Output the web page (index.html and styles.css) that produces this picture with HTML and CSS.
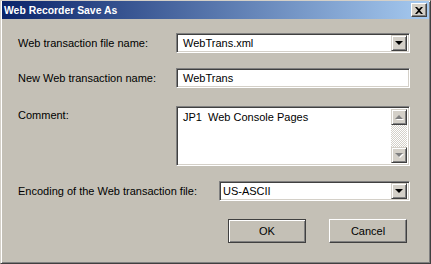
FILE: index.html
```html
<!DOCTYPE html>
<html lang="en">
<head>
    <meta charset="UTF-8">
    <title>Web Recorder Save As</title>
    <link rel="stylesheet" href="styles.css">
</head>
<body>

    <!-- Ventana de dialogo -->
    <div class="ventana">
        <div class="barra-titulo">
            <span class="titulo">Web Recorder Save As</span>
            <button class="boton-cerrar">
                <svg width="8" height="7" viewBox="0 0 8 7"><path d="M0 0h2l2 2 2-2h2L5 3.5 8 7H6L4 5 2 7H0l3-3.5z" fill="#000"/></svg>
            </button>
        </div>

        <div class="contenido">
            <div class="fila">
                <label class="etiqueta">Web transaction file name:</label>
                <div class="combo">
                    <span class="valor">WebTrans.xml</span>
                    <span class="flecha"><i class="triangulo"></i></span>
                </div>
            </div>

            <div class="fila fila-nombre">
                <label class="etiqueta">New Web transaction name:</label>
                <div class="campo"><span class="valor">WebTrans</span></div>
            </div>

            <div class="fila fila-comentario">
                <label class="etiqueta">Comment:</label>
                <div class="area">
                    <span class="valor">JP1&nbsp;&nbsp;Web Console Pages</span>
                    <div class="scroll">
                        <span class="scroll-boton"><i class="triangulo-gris arriba"></i></span>
                        <span class="pista"></span>
                        <span class="scroll-boton"><i class="triangulo-gris"></i></span>
                    </div>
                </div>
            </div>

            <div class="fila fila-codificacion">
                <label class="etiqueta etiqueta-larga">Encoding of the Web transaction file:</label>
                <div class="combo">
                    <span class="valor">US-ASCII</span>
                    <span class="flecha"><i class="triangulo"></i></span>
                </div>
            </div>

            <div class="acciones">
                <button class="boton boton-defecto">OK</button>
                <button class="boton">Cancel</button>
            </div>
        </div>
    </div>

</body>
</html>
```

FILE: styles.css
```css
body {
    margin: 0;
    font-family: "Liberation Sans", Arial, sans-serif;
    font-size: 11px;
    color: #000;
    background: #c4c0b6;
}
.ventana {
    width: 431px;
    height: 264px;
    box-sizing: border-box;
    background: #c4c0b6;
    border: 1px solid;
    border-color: #d4d0c8 #404040 #404040 #d4d0c8;
    box-shadow: inset 1px 1px #fff, inset -1px -1px #808080;
}
.barra-titulo {
    height: 18px;
    margin: 0 1px;
    display: flex;
    align-items: center;
    justify-content: space-between;
    padding: 0 2px 0 2px;
    background: linear-gradient(to right, #0a246a, #a6caf0);
}
.titulo {
    color: #fff;
    font-weight: bold;
    font-size: 10.4px;
}
.boton-cerrar {
    width: 16px;
    height: 14px;
    padding: 0;
    display: flex;
    align-items: center;
    justify-content: center;
    background: #d4d0c8;
    border: 1px solid;
    border-color: #fff #404040 #404040 #fff;
    box-shadow: inset -1px -1px #808080;
}
.contenido {
    padding: 14px 20px 0 17px;
}
.fila {
    display: flex;
    align-items: center;
    height: 20px;
}
.fila-nombre {
    margin-top: 15px;
}
.fila-comentario {
    margin-top: 18px;
    height: 60px;
    align-items: flex-start;
}
.fila-comentario .etiqueta {
    padding-top: 2px;
}
.fila-codificacion {
    margin-top: 15px;
}
.etiqueta {
    width: 158px;
    flex: none;
    line-height: 14px;
}
.etiqueta-larga {
    width: 201px;
}
.combo, .campo, .area {
    flex: 1;
    height: 100%;
    box-sizing: border-box;
    display: flex;
    align-items: center;
    background: #fff;
    border: 1px solid;
    border-color: #808080 #fff #fff #808080;
    box-shadow: inset 1px 1px #404040, inset -1px -1px #d4d0c8;
    padding: 2px;
}
.valor {
    flex: 1;
    padding-left: 4px;
    line-height: 14px;
}
.fila-codificacion .valor {
    padding-left: 1px;
}
.flecha, .scroll-boton {
    width: 16px;
    height: 16px;
    box-sizing: border-box;
    display: flex;
    align-items: center;
    justify-content: center;
    background: #d4d0c8;
    border: 1px solid;
    border-color: #d4d0c8 #404040 #404040 #d4d0c8;
    box-shadow: inset 1px 1px #fff, inset -1px -1px #808080;
}
.triangulo {
    width: 0;
    height: 0;
    border-left: 4px solid transparent;
    border-right: 4px solid transparent;
    border-top: 4px solid #000;
}
.area {
    align-items: stretch;
}
.area .valor {
    padding-top: 1px;
}
.scroll {
    width: 16px;
    display: flex;
    flex-direction: column;
}
.pista {
    flex: 1;
    background: repeating-conic-gradient(#d4d0c8 0 25%, #fff 0 50%) 0 0 / 2px 2px;
}
.triangulo-gris {
    width: 0;
    height: 0;
    border-left: 4px solid transparent;
    border-right: 4px solid transparent;
    border-top: 4px solid #808080;
    filter: drop-shadow(1px 1px 0 #fff);
}
.triangulo-gris.arriba {
    border-top: none;
    border-bottom: 4px solid #808080;
}
.acciones {
    display: flex;
    justify-content: flex-end;
    gap: 23px;
    margin-top: 18px;
    padding-right: 3px;
}
.boton {
    width: 78px;
    height: 24px;
    padding: 0;
    font-family: "Liberation Sans", Arial, sans-serif;
    font-size: 11px;
    color: #000;
    background: #c4c0b6;
    border: 1px solid;
    border-color: #fff #404040 #404040 #fff;
    box-shadow: inset -1px -1px #808080;
}
.boton-defecto {
    border-color: #404040;
    box-shadow: inset 1px 1px #fff, inset -1px -1px #808080;
}
```
